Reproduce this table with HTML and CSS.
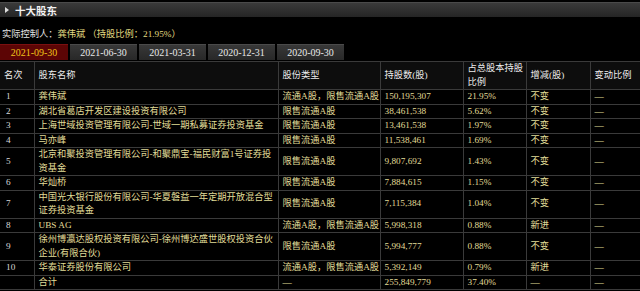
FILE: index.html
```html
<!DOCTYPE html>
<html lang="zh-CN">
<head>
<meta charset="utf-8">
<title>十大股东</title>
<link rel="stylesheet" href="styles.css">
</head>
<body>
<div class="panel">
  <div class="section-bar">
    <span class="tri"></span>
    <span class="section-title">十大股东</span>
  </div>
  <div class="controller">
    <span class="label">实际控制人：</span><span class="hl">龚伟斌</span> <span class="hl">（持股比例：21.95%）</span>
  </div>
  <div class="tabs">
    <div class="tab active">2021-09-30</div>
    <div class="tab">2021-06-30</div>
    <div class="tab">2021-03-31</div>
    <div class="tab">2020-12-31</div>
    <div class="tab">2020-09-30</div>
  </div>
  <table class="grid">
    <colgroup>
      <col class="c-rank"><col class="c-name"><col class="c-type"><col class="c-num"><col class="c-pct"><col class="c-chg"><col class="c-ratio">
    </colgroup>
    <thead>
      <tr>
        <th>名次</th><th>股东名称</th><th>股份类型</th><th>持股数(股)</th><th>占总股本持股比例</th><th>增减(股)</th><th>变动比例</th>
      </tr>
    </thead>
    <tbody>
      <tr><td class="rank">1</td><td>龚伟斌</td><td class="nw">流通A股，限售流通A股</td><td>150,195,307</td><td>21.95%</td><td>不变</td><td>—</td></tr>
      <tr><td class="rank">2</td><td>湖北省葛店开发区建设投资有限公司</td><td class="nw">限售流通A股</td><td>38,461,538</td><td>5.62%</td><td>不变</td><td>—</td></tr>
      <tr><td class="rank">3</td><td>上海世域投资管理有限公司-世域一期私募证券投资基金</td><td class="nw">限售流通A股</td><td>13,461,538</td><td>1.97%</td><td>不变</td><td>—</td></tr>
      <tr><td class="rank">4</td><td>马亦峰</td><td class="nw">限售流通A股</td><td>11,538,461</td><td>1.69%</td><td>不变</td><td>—</td></tr>
      <tr><td class="rank">5</td><td>北京和聚投资管理有限公司-和聚鼎宝-福民财富1号证券投资基金</td><td class="nw">限售流通A股</td><td>9,807,692</td><td>1.43%</td><td>不变</td><td>—</td></tr>
      <tr><td class="rank">6</td><td>华灿桥</td><td class="nw">限售流通A股</td><td>7,884,615</td><td>1.15%</td><td>不变</td><td>—</td></tr>
      <tr><td class="rank">7</td><td>中国光大银行股份有限公司-华夏磐益一年定期开放混合型证券投资基金</td><td class="nw">限售流通A股</td><td>7,115,384</td><td>1.04%</td><td>不变</td><td>—</td></tr>
      <tr><td class="rank">8</td><td>UBS AG</td><td class="nw">流通A股，限售流通A股</td><td>5,998,318</td><td>0.88%</td><td>新进</td><td>—</td></tr>
      <tr><td class="rank">9</td><td>徐州博瀛达股权投资有限公司-徐州博达盛世股权投资合伙企业(有限合伙)</td><td class="nw">限售流通A股</td><td>5,994,777</td><td>0.88%</td><td>不变</td><td>—</td></tr>
      <tr><td class="rank">10</td><td>华泰证券股份有限公司</td><td class="nw">流通A股，限售流通A股</td><td>5,392,149</td><td>0.79%</td><td>新进</td><td>—</td></tr>
      <tr><td class="rank"></td><td>合计</td><td class="nw">—</td><td>255,849,779</td><td>37.40%</td><td>—</td><td>—</td></tr>
    </tbody>
  </table>
</div>
</body>
</html>
```

FILE: styles.css
```css
* { box-sizing: border-box; }

html, body {
  margin: 0;
  padding: 0;
  background: #000;
}

body {
  font-family: "Liberation Serif", "Noto Sans CJK SC", serif;
  font-size: 9.25px;
  color: #ddd;
  width: 640px;
  height: 291px;
  overflow: hidden;
}

.panel {
  padding-top: 2px;
}

.section-bar {
  height: 15px;
  display: flex;
  align-items: center;
  gap: 6px;
  padding-left: 5px;
  background: linear-gradient(#3a3a3a, #252525);
  border-top: 1px solid #4a4a4a;
}

.tri {
  width: 0;
  height: 0;
  border-top: 3px solid transparent;
  border-bottom: 3px solid transparent;
  border-left: 4px solid #ddd;
}

.section-title {
  font-family: "Noto Sans CJK SC", sans-serif;
  font-size: 10.5px;
  font-weight: bold;
  color: #f2f2f2;
}

.controller {
  margin-top: 10px;
  padding-left: 2px;
  height: 14px;
  line-height: 14px;
  color: #e4e4e4;
}

.controller .hl {
  color: #e2da80;
}

.tabs {
  display: flex;
  gap: 2px;
  margin-top: 3px;
  height: 16px;
}

.tab {
  width: 67px;
  height: 16px;
  line-height: 16px;
  text-align: center;
  background: linear-gradient(#383838, #282828);
  border-top: 1px solid #4a4a4a;
  color: #e8e8e8;
  font-size: 10px;
}

.tab.active {
  width: 68px;
  background: #5c0505;
  border-top-color: #7a1010;
  color: #f0c419;
}

.grid {
  width: 640px;
  table-layout: fixed;
  border-collapse: collapse;
  margin-top: 1px;
}

.c-rank { width: 34px; }
.c-name { width: 244px; }
.c-type { width: 102px; }
.c-num { width: 83px; }
.c-pct { width: 63px; }
.c-chg { width: 64px; }
.c-ratio { width: 50px; }

.grid th,
.grid td {
  border: 1px solid #3a3a3a;
  padding: 0 2px 0 4px;
  line-height: 13.5px;
  text-align: left;
  vertical-align: middle;
  font-weight: normal;
}

.grid tr > :first-child { border-left: none; }
.grid tr > :last-child { border-right: none; }

.grid th {
  background: #0d0d0d;
  color: #ececec;
}

.grid td {
  color: #e0dc98;
}

.grid td.rank {
  padding-left: 6px;
  color: #d8d8d8;
}

.grid td.nw {
  white-space: nowrap;
  overflow: hidden;
}
```
